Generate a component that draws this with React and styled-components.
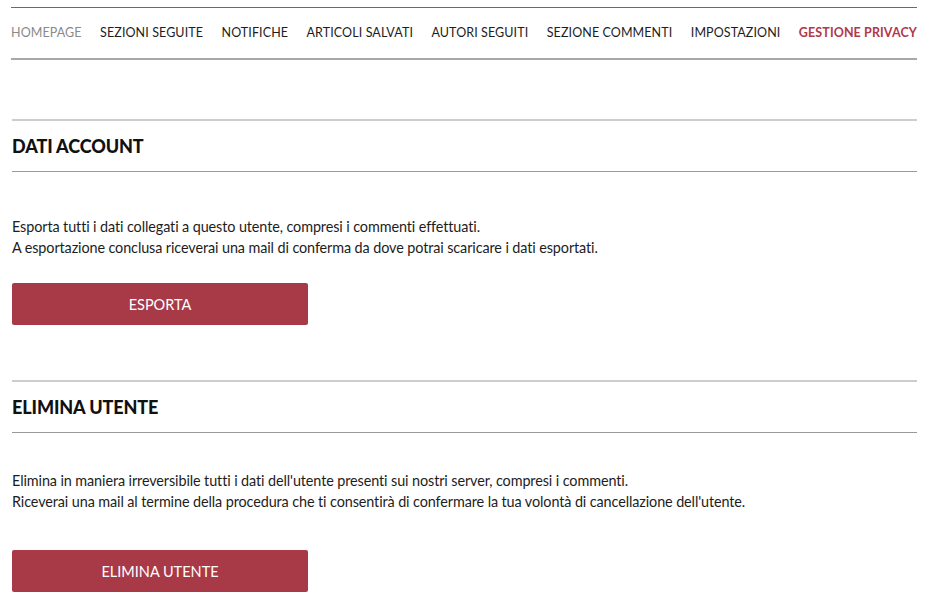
import React from "react";
import styled, { createGlobalStyle } from "styled-components";

const Global = createGlobalStyle`
  html, body { margin: 0; padding: 0; background: #fff; }
  body { font-family: Lato, "Noto Sans", sans-serif; color: #1a1a1a; }
  * { box-sizing: border-box; }
`;

const Page = styled.div`
  padding: 7px 15px 0 11px;
  width: 932px;
`;

const Nav = styled.nav`
  display: flex;
  justify-content: space-between;
  align-items: center;
  height: 53px;
  border-top: 1px solid #6a6a6a;
  border-bottom: 2px solid #a8a8a8;
  padding-bottom: 1px;
`;

const NavItem = styled.a`
  font-size: 12.5px;
  letter-spacing: 0.1px;
  text-transform: uppercase;
  white-space: nowrap;
  color: ${(p) => (p.$variant === "muted" ? "#8a8a8a" : p.$variant === "active" ? "#b0394a" : "#1d1d1d")};
  font-weight: ${(p) => (p.$variant === "active" ? 700 : 400)};
  text-decoration: none;
`;

const Section = styled.section`
  margin-top: ${(p) => p.$top}px;
  padding-left: 1px;
`;

const SectionHeader = styled.h2`
  margin: 0;
  height: 53px;
  display: flex;
  align-items: center;
  border-top: 2px solid #cdcdcd;
  border-bottom: 1px solid #9a9a9a;
  font-size: 18px;
  font-weight: 900;
  color: #111;
  letter-spacing: -0.1px;
`;

const Text = styled.p`
  margin: ${(p) => p.$gap}px 0 0;
  font-size: 14.4px;
  line-height: 21px;
  color: #1d1d1d;
  letter-spacing: -0.1px;
`;

const Button = styled.button`
  display: block;
  margin-top: ${(p) => p.$gap}px;
  width: 296px;
  height: 42px;
  border: none;
  border-radius: 2px;
  background: #a83a48;
  color: #fff;
  font-family: Lato, "Noto Sans", sans-serif;
  font-size: 14.5px;
  text-transform: uppercase;
  cursor: pointer;
`;

const navItems = [
  { label: "Homepage", variant: "muted" },
  { label: "Sezioni seguite" },
  { label: "Notifiche" },
  { label: "Articoli salvati" },
  { label: "Autori seguiti" },
  { label: "Sezione commenti" },
  { label: "Impostazioni" },
  { label: "Gestione privacy", variant: "active" },
];

export default function App() {
  return (
    <Page>
      <Global />
      <Nav>
        {navItems.map((n) => (
          <NavItem key={n.label} $variant={n.variant}>
            {n.label}
          </NavItem>
        ))}
      </Nav>

      <Section $top={59}>
        <SectionHeader>DATI ACCOUNT</SectionHeader>
        <Text $gap={44}>
          Esporta tutti i dati collegati a questo utente, compresi i commenti effettuati.
          <br />
          A esportazione conclusa riceverai una mail di conferma da dove potrai scaricare i dati esportati.
        </Text>
        <Button $gap={25}>Esporta</Button>
      </Section>

      <Section $top={55}>
        <SectionHeader>ELIMINA UTENTE</SectionHeader>
        <Text $gap={37}>
          Elimina in maniera irreversibile tutti i dati dell'utente presenti sui nostri server, compresi i commenti.
          <br />
          Riceverai una mail al termine della procedura che ti consentirà di confermare la tua volontà di cancellazione dell'utente.
        </Text>
        <Button $gap={38}>Elimina utente</Button>
      </Section>
    </Page>
  );
}
